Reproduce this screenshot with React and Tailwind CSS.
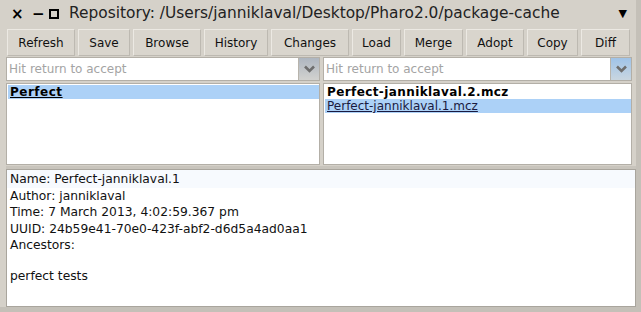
import React from "react";

const buttons = [
  ["Refresh", 68],
  ["Save", 52],
  ["Browse", 68],
  ["History", 64],
  ["Changes", 78],
  ["Load", 49],
  ["Merge", 59],
  ["Adopt", 58],
  ["Copy", 51],
  ["Diff", 49],
];

function Chevron({ active }) {
  return (
    <div
      className={
        "w-[21px] h-full flex items-center justify-center border-l border-[#b8b4ac] " +
        (active
          ? "bg-gradient-to-b from-[#9fc3e8] to-[#c9d6e0]"
          : "bg-gradient-to-b from-[#aeb6c0] to-[#d2d2cf]")
      }
    >
      <svg width="11" height="8" viewBox="0 0 11 8">
        <path d="M1 1.5 L5.5 6 L10 1.5" fill="none" stroke="#6e6e6e" strokeWidth="2.6" />
      </svg>
    </div>
  );
}

function Column({ active, children }) {
  return (
    <div className="flex flex-col gap-[2px] min-w-0">
      <div className="h-[24px] flex border border-[#b3afa7] bg-white">
        <div className="flex-1 flex items-center pl-[2px] text-[12px] text-[#a4a4a4]">Hit return to accept</div>
        <Chevron active={active} />
      </div>
      <div className="h-[82px] bg-white border border-[#b3afa7] pt-[1px] pl-[1px]">{children}</div>
    </div>
  );
}

export default function App() {
  return (
    <div className="w-[641px] h-[312px] bg-[#d5d1c9] flex flex-col font-['DejaVu_Sans',sans-serif] text-black overflow-hidden border-r-[5px] border-b-[5px] border-[#c4c0b8]">
      <div className="h-[28px] flex items-center pl-[11px] pr-[6px]">
        <span className="text-[15px] font-bold leading-none w-[18px]">×</span>
        <span className="text-[15px] font-bold leading-none w-[17px] ml-[3px]">−</span>
        <span className="w-[10px] h-[10px] border-2 border-black ml-[0px]"></span>
        <span className="ml-[10px] text-[15.4px] text-[#222]">
          Repository: /Users/janniklaval/Desktop/Pharo2.0/package-cache
        </span>
        <span className="ml-auto text-[11px] mr-[3px]">▼</span>
      </div>
      <div className="flex gap-[3px] pl-[7px] h-[27px] mt-[1px]">
        {buttons.map(([label, w]) => (
          <div
            key={label}
            style={{ width: w }}
            className="h-full flex items-center justify-center text-[12px] text-[#111] bg-[#d9d5cd] border border-t-[#ece9e3] border-l-[#ece9e3] border-r-[#bdb9b1] border-b-[#bdb9b1]"
          >
            {label}
          </div>
        ))}
      </div>
      <div className="grid grid-cols-[314px_309px] gap-[3px] pl-[6px] mt-[1px]">
        <Column>
          <div className="bg-[#acd1f7] h-[14px] flex items-center pl-[2px] text-[12px] font-bold underline tracking-[0.5px]">
            Perfect
          </div>
        </Column>
        <Column active>
          <div className="h-[14px] flex items-center pl-[2px] text-[12px] font-bold tracking-[0.4px]">
            Perfect-janniklaval.2.mcz
          </div>
          <div className="bg-[#acd1f7] h-[14px] flex items-center pl-[2px] text-[12px] underline text-[#1a1a40]">
            Perfect-janniklaval.1.mcz
          </div>
        </Column>
      </div>
      <div className="h-[3px] mt-[1px] ml-[6px] bg-[#c8c4bc]"></div>
      <div className="flex-1 ml-[6px] mb-[0px] bg-white border border-[#a9a59d] text-[12.3px] leading-[16.5px] text-[#111]">
        <div className="bg-[#f7fafe] pl-[3px] pt-[1px]">Name: Perfect-janniklaval.1</div>
        <div className="pl-[3px]">
          <div>Author: janniklaval</div>
          <div>Time: 7 March 2013, 4:02:59.367 pm</div>
          <div>UUID: 24b59e41-70e0-423f-abf2-d6d5a4ad0aa1</div>
          <div>Ancestors:</div>
          <div className="h-[16.5px]"></div>
          <div className="mt-[-2px]">perfect tests</div>
        </div>
      </div>
    </div>
  );
}
